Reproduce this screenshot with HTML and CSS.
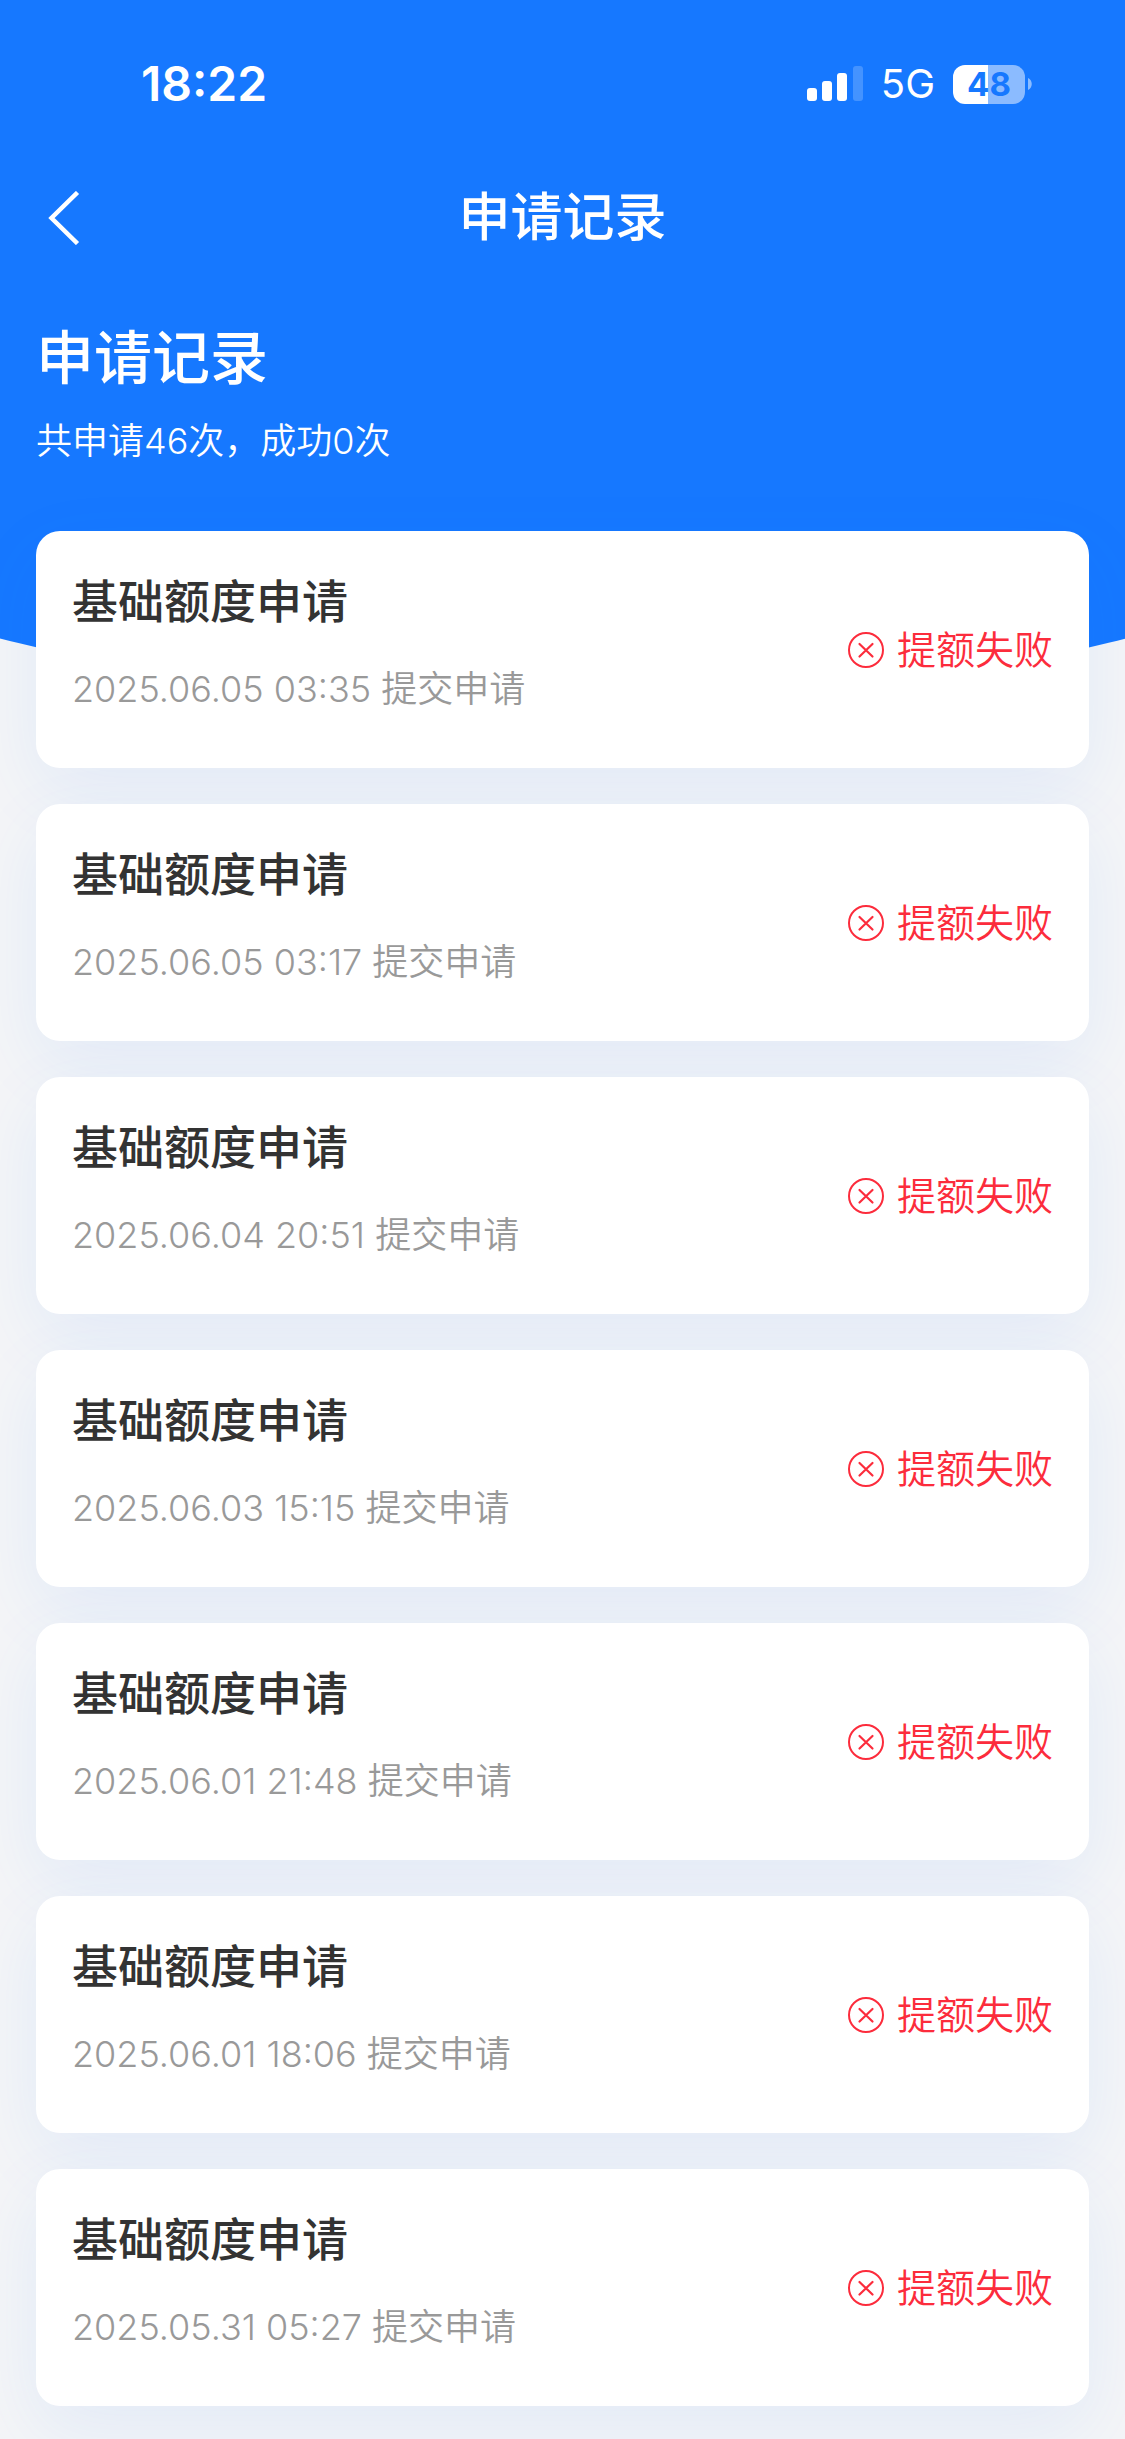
FILE: index.html
```html
<!DOCTYPE html>
<html lang="zh-CN">
<head>
<meta charset="utf-8">
<meta name="viewport" content="width=device-width, initial-scale=1">
<title>申请记录</title>
<link rel="stylesheet" href="styles.css">
</head>
<body>
<svg class="sprite" aria-hidden="true">
  <symbol id="icon-fail" viewBox="0 0 36 36">
    <circle cx="18" cy="18" r="17" fill="none" stroke="currentColor" stroke-width="2"/>
    <path d="M11.5 12 L24.5 24.5 M24.5 12 L11.5 24.5" fill="none" stroke="currentColor" stroke-width="2.2" stroke-linecap="round"/>
  </symbol>
</svg>
<div class="page">
  <div class="backdrop" aria-hidden="true"></div>
  <header class="top">
    <div class="statusbar">
      <span class="clock">18:22</span>
      <div class="indicators">
        <svg class="signal" width="56" height="36" viewBox="0 0 56 36" fill="#fff" aria-hidden="true">
          <rect x="0" y="22" width="10" height="13" rx="3"/>
          <rect x="15" y="15" width="10" height="20" rx="3"/>
          <rect x="30" y="7" width="10" height="28" rx="3"/>
          <rect x="46" y="0" width="10" height="35" rx="3" opacity=".2"/>
        </svg>
        <span class="network">5G</span>
        <div class="power">
          <span class="battery">48</span>
          <svg width="4" height="12" viewBox="0 0 4 12" fill="#fff" opacity=".5" aria-hidden="true"><path d="M0 0 C5 2 5 10 0 12 Z"/></svg>
        </div>
      </div>
    </div>
    <nav class="navbar">
      <button class="back" type="button" aria-label="返回">
        <svg width="32" height="54" viewBox="0 0 32 54" aria-hidden="true"><path d="M29.500 1.500 L3.500 27 L29.500 52.500" fill="none" stroke="#fff" stroke-width="4.500"/></svg>
      </button>
      <h1 class="nav-title">申请记录</h1>
    </nav>
  </header>
  <main class="content">
    <section class="summary">
      <h2 class="summary-title">申请记录</h2>
      <p class="summary-text">共申请46次，成功0次</p>
    </section>
    <ul class="records">
      <li class="card">
        <div class="info"><h3 class="name">基础额度申请</h3><p class="date">2025.06.05 03:35 提交申请</p></div>
        <div class="result"><svg class="result-icon" aria-hidden="true"><use href="#icon-fail"/></svg><span>提额失败</span></div>
      </li>
      <li class="card">
        <div class="info"><h3 class="name">基础额度申请</h3><p class="date">2025.06.05 03:17 提交申请</p></div>
        <div class="result"><svg class="result-icon" aria-hidden="true"><use href="#icon-fail"/></svg><span>提额失败</span></div>
      </li>
      <li class="card">
        <div class="info"><h3 class="name">基础额度申请</h3><p class="date">2025.06.04 20:51 提交申请</p></div>
        <div class="result"><svg class="result-icon" aria-hidden="true"><use href="#icon-fail"/></svg><span>提额失败</span></div>
      </li>
      <li class="card">
        <div class="info"><h3 class="name">基础额度申请</h3><p class="date">2025.06.03 15:15 提交申请</p></div>
        <div class="result"><svg class="result-icon" aria-hidden="true"><use href="#icon-fail"/></svg><span>提额失败</span></div>
      </li>
      <li class="card">
        <div class="info"><h3 class="name">基础额度申请</h3><p class="date">2025.06.01 21:48 提交申请</p></div>
        <div class="result"><svg class="result-icon" aria-hidden="true"><use href="#icon-fail"/></svg><span>提额失败</span></div>
      </li>
      <li class="card">
        <div class="info"><h3 class="name">基础额度申请</h3><p class="date">2025.06.01 18:06 提交申请</p></div>
        <div class="result"><svg class="result-icon" aria-hidden="true"><use href="#icon-fail"/></svg><span>提额失败</span></div>
      </li>
      <li class="card">
        <div class="info"><h3 class="name">基础额度申请</h3><p class="date">2025.05.31 05:27 提交申请</p></div>
        <div class="result"><svg class="result-icon" aria-hidden="true"><use href="#icon-fail"/></svg><span>提额失败</span></div>
      </li>
    </ul>
  </main>
</div>
</body>
</html>
```
FILE: styles.css
```css
* { box-sizing: border-box; }

body {
  margin: 0;
  background: #f4f5f7;
  color: #333;
  font-family: Inter, "Noto Sans CJK SC", sans-serif;
  font-size: 36px;
}

h1, h2, h3, p, ul { margin: 0; padding: 0; }

.sprite { display: none; }

.page {
  position: relative;
  overflow: hidden;
}

/* Blue area whose lower edge is a shallow arc */
.backdrop {
  position: absolute;
  inset: 0 0 auto;
  height: 710px;
  overflow: hidden;
}

.backdrop::before {
  content: "";
  position: absolute;
  left: -150%;
  bottom: 0;
  width: 400%;
  aspect-ratio: 1;
  border-radius: 50%;
  background: #1678ff;
}

.top, .content { position: relative; }

.top { color: #fff; }

.statusbar {
  display: flex;
  align-items: center;
  justify-content: space-between;
  padding: 54px 93px 36px 141px;
  line-height: 60px;
}

.clock {
  font-size: 48px;
  font-weight: 600;
}

.indicators {
  display: flex;
  align-items: center;
  gap: 18px;
}

.network { font-size: 40px; }

.power {
  display: flex;
  align-items: center;
  gap: 3px;
}

.battery {
  width: 72px;
  border-radius: 12px;
  background: linear-gradient(90deg, #fff 49%, #8bbbff 49%);
  color: #1678ff;
  font-size: 33px;
  font-weight: 700;
  line-height: 39px;
  text-align: center;
}

.navbar {
  display: grid;
  grid-template-columns: 96px 1fr 96px;
  align-items: center;
  height: 136px;
}

.back {
  display: flex;
  justify-content: center;
  padding: 24px 0 24px 32px;
  border: 0;
  background: none;
  cursor: pointer;
}

.nav-title {
  font-size: 52px;
  font-weight: 500;
  line-height: 78px;
  text-align: center;
}

.content { padding: 30px 36px 33px; }

.summary {
  padding-bottom: 63px;
  color: #fff;
}

.summary-title {
  font-size: 58px;
  font-weight: 500;
  line-height: 84px;
}

.summary-text {
  padding-top: 14px;
  font-weight: 350;
  line-height: 54px;
}

.records {
  display: grid;
  gap: 36px;
  list-style: none;
}

.card {
  display: flex;
  align-items: center;
  justify-content: space-between;
  padding: 0 36px;
  border-radius: 24px;
  background: #fff;
  box-shadow: 0 24px 72px rgba(30, 110, 255, .08);
}

.info { padding: 36px 0 52px; }

.name {
  font-size: 46px;
  font-weight: 500;
  line-height: 68px;
}

.date {
  padding-top: 27px;
  color: #999;
  font-weight: 350;
  line-height: 54px;
}

.result {
  display: flex;
  align-items: center;
  gap: 13px;
  color: #fc2c3c;
  font-size: 39px;
  font-weight: 350;
  line-height: 54px;
}

.result-icon {
  width: 36px;
  height: 36px;
}
```
